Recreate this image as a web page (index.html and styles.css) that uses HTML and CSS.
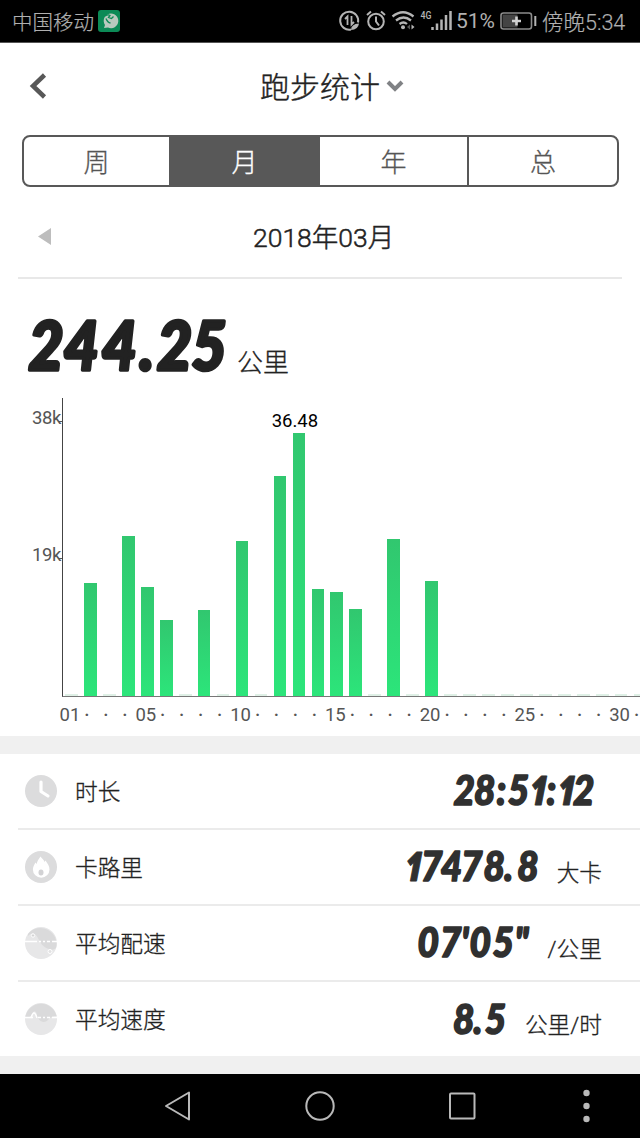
FILE: index.html
```html
<!DOCTYPE html>
<html lang="zh-CN">
<head>
    <meta charset="UTF-8">
    <meta name="viewport" content="width=device-width, initial-scale=1.0">
    <title>跑步统计</title>
    <link rel="stylesheet" href="styles.css">
</head>
<body>

<div class="status-bar">
    <span class="carrier">中国移动</span>
    <svg class="app-icon" width="22" height="22" viewBox="0 0 22 22">
        <rect width="22" height="22" rx="3" fill="#0c8a56"/>
        <path d="M6 18l1-3a7.300 7.300 0 1 1 3 2.500z" fill="#b9c9be"/>
        <path d="M7 6q3-2 5-.5l-1.500 2 3 1 2-2M8 8.500q1.500 4 4.500 4.500" stroke="#0c8a56" stroke-width="1.300" fill="none"/>
    </svg>
    <svg class="status-icons" width="116" height="30" viewBox="336 7 116 30" fill="none" stroke="#b4b4b4" stroke-width="2">
        <path d="M351 30.500a9 9 0 1 1 7-7"/>
        <path d="M345 20l2.500-2.500v8.500M351.500 17v8.500l2.500-2.500" stroke-width="1.800"/>
        <path d="M351 31q0-6 8-6.500-1 6.500-8 6.500z" fill="#b4b4b4" stroke="none"/>
        <circle cx="376" cy="22.500" r="7.800"/>
        <path d="M376 17.500v5l3 4M367 16l4-3.500M385 16l-4-3.500"/>
        <path d="M392.500 17.500q10.500-8.500 21 0M396 21.500q7.500-6 15 0M399.500 25q4-3 7.500 0" stroke-width="2.300"/>
        <circle cx="403" cy="28.300" r="2" fill="#b4b4b4" stroke="none"/>
        <path d="M410 25.500v5l-3-2.500z" fill="#555" stroke="none"/>
        <path d="M411.500 25.500v5l3-2.500z" fill="#b4b4b4" stroke="none"/>
        <text x="420.500" y="20" class="net" textLength="11" lengthAdjust="spacingAndGlyphs">4G</text>
        <path d="M432.500 31v-3M437 31v-6.500M441.500 31v-10.500M446 31v-15M450.500 31v-19" stroke-width="2.500"/>
    </svg>
    <span class="percent">51%</span>
    <svg class="battery" width="37" height="20" viewBox="0 0 37 20">
        <rect x="1" y="2" width="30.500" height="16" rx="2.500" fill="none" stroke="#8c8c8c" stroke-width="1.600"/>
        <rect x="2.500" y="3.500" width="15" height="13" fill="#444"/>
        <path d="M16.500 5.500v9M12 10h9" stroke="#d0d0d0" stroke-width="2.600"/>
        <path d="M35.300 5v10" stroke="#b4b4b4" stroke-width="2"/>
    </svg>
    <span class="clock">傍晚5:34</span>
</div>

<div class="header">
    <svg class="back" width="18" height="28" viewBox="0 0 18 28">
        <path d="M15.500 3L4 14l11.500 11" fill="none" stroke="#585858" stroke-width="4.500"/>
    </svg>
    <h1>跑步统计</h1>
    <svg class="chevron" width="18" height="14" viewBox="0 0 18 14">
        <path d="M2 3l7 7 7-7" fill="none" stroke="#808285" stroke-width="4"/>
    </svg>
</div>

<div class="tabs">
    <div class="tab">周</div>
    <div class="tab active">月</div>
    <div class="tab">年</div>
    <div class="tab">总</div>
</div>

<div class="month">
    <svg class="prev" width="13" height="17" viewBox="0 0 13 17"><path d="M13 0v17L0 8.500z" fill="#bdbdbd"/></svg>
    <span>2018年03月</span>
</div>

<div class="total">
    <svg class="num" width="206" height="60" viewBox="0 0 206 60"><text transform="scale(.92 1)" x="3.800 42 83.500 124.500 143.500 181" y="53">244.25</text></svg>
    <span>公里</span>
</div>

<div class="chart">
    <div class="y-axis">
        <span>38k</span>
        <span>19k</span>
    </div>
    <div class="plot">
        <div class="bars" id="bars"></div>
        <div class="days" id="days"></div>
    </div>
</div>

<div class="stats">
    <div class="row">
        <svg class="icon" width="32" height="32" viewBox="0 0 32 32">
            <circle cx="16" cy="16" r="16" fill="#dcdcdd"/>
            <path d="M16 7v9.500l7 4.500" fill="none" stroke="#fff" stroke-width="3.200" stroke-linecap="round" stroke-linejoin="round"/>
        </svg>
        <span class="label">时长</span>
        <svg class="num" width="150" height="44" viewBox="0 0 150 44"><text transform="scale(.9 1)" x="2.800 25.500 50.500 63 87 106 118 135.500" y="35.500">28:5<tspan class="one">1</tspan>:<tspan class="one">1</tspan>2</text></svg>
    </div>
    <div class="row">
        <svg class="icon" width="32" height="32" viewBox="0 0 32 32">
            <circle cx="16" cy="16" r="16" fill="#dcdcdd"/>
            <path d="M15.500 5.500c1.500 2 3.500 3.500 4 5.500l1-1.500c2 3 4 5.500 4 9a8.300 8.300 0 0 1-16.600 0c0-3 1.500-5 2.600-7l1.200 1.500c.3-3 2.300-5 3.800-7.500z" fill="#fff"/>
            <ellipse cx="16" cy="21.500" rx="2.500" ry="3" fill="#d2d2d4"/>
        </svg>
        <span class="label">卡路里</span>
        <svg class="num" width="140" height="44" viewBox="0 0 140 44"><text transform="scale(.9 1)" x="6 24.500 46.500 69 94 117 131.500" y="35.500"><tspan class="one">1</tspan>7478.8</text></svg>
        <span class="unit unit-cal">大卡</span>
    </div>
    <div class="row">
        <svg class="icon" width="32" height="32" viewBox="0 0 32 32">
            <circle cx="16" cy="16" r="16" fill="#e7e7e8"/>
            <path d="M3 7a16 16 0 0 1 28 14q-3 3-7 1-6-1-10-9Q9 2 3 9z" fill="#dadadb"/>
            <path d="M0 14.500h12M14 14.500h2M18 14.500h2M22 14.500h3M27 14.500h5" stroke="#fff" stroke-width="1.500"/>
            <circle cx="8" cy="8.500" r="1.700" fill="#d4d4d5" stroke="#fff"/>
            <circle cx="25" cy="24.500" r="2" fill="#e2e2e3" stroke="#fff"/>
        </svg>
        <span class="label">平均配速</span>
        <svg class="num" width="120" height="44" viewBox="0 0 120 44"><text transform="scale(.9 1)" x="6 31 54.500 64 89.500 114" y="35.500">07'05"</text></svg>
        <span class="unit unit-pace">/公里</span>
    </div>
    <div class="row">
        <svg class="icon" width="32" height="32" viewBox="0 0 32 32">
            <circle cx="16" cy="16" r="16" fill="#e7e7e8"/>
            <path d="M.5 13a16 16 0 0 1 31.100 0q-4 0-7 2-4 6-9 3-4-3-4-8Q9 6 7 11q-2 4-6.500 4z" fill="#dadadb"/>
            <path d="M0 14.500h8M13 14.500h3M18 14.500h2M22 14.500h3M27 14.500h5" stroke="#fff" stroke-width="1.500"/>
            <path d="M6 15q3-10 6 0" fill="none" stroke="#fff" stroke-width="1.500"/>
        </svg>
        <span class="label">平均速度</span>
        <svg class="num" width="62" height="44" viewBox="0 0 62 44"><text transform="scale(.9 1)" x="6.700 29.500 42" y="36.500">8.5</text></svg>
        <span class="unit unit-speed">公里/时</span>
    </div>
</div>

<div class="nav-bar">
    <svg width="640" height="64" viewBox="0 0 640 64" fill="none" stroke="#b9b9b9" stroke-width="2" stroke-linejoin="round">
        <path d="M189 18.500v27L166 32z"/>
        <circle cx="320" cy="32" r="13.700"/>
        <rect x="450" y="19.500" width="24.500" height="25" rx="1"/>
        <g fill="#b9b9b9" stroke="none">
            <circle cx="586.500" cy="19" r="3.200"/>
            <circle cx="586.500" cy="32" r="3.200"/>
            <circle cx="586.500" cy="45" r="3.200"/>
        </g>
    </svg>
</div>

<script>
    // bar height in px for each day that has a run
    const runs = {
        2: 113, 4: 160, 5: 109, 6: 76, 8: 86.5, 10: 155.5, 12: 220, 13: 263,
        14: 107.5, 15: 104, 16: 87.5, 18: 157, 20: 115
    };
    const bars = document.getElementById('bars');
    const days = document.getElementById('days');

    for (let d = 1; d <= 31; d++) {
        const cell = document.createElement('div');
        cell.className = 'cell';
        if (d === 13) {
            const tip = document.createElement('span');
            tip.className = 'tip';
            tip.textContent = '36.48';
            cell.appendChild(tip);
        }
        const bar = document.createElement('div');
        bar.className = runs[d] ? 'bar' : 'bar empty';
        if (runs[d]) bar.style.height = runs[d] + 'px';
        cell.appendChild(bar);
        bars.appendChild(cell);

        // every fifth day gets a number, the others a dot
        const day = document.createElement('div');
        if (d === 1 || d % 5 === 0) {
            day.className = 'day';
            day.textContent = String(d).padStart(2, '0');
        } else {
            day.className = 'day dot';
            day.textContent = '·';
        }
        days.appendChild(day);
    }
</script>

</body>
</html>
```
FILE: styles.css
```css
* {
    box-sizing: border-box;
}
body {
    margin: 0;
    width: 640px;
    height: 1138px;
    overflow: hidden;
    background: #fff;
    color: #222;
    font-family: Roboto, "Noto Sans CJK SC", sans-serif;
}
svg {
    display: block;
    flex-shrink: 0;
}
.status-bar {
    display: flex;
    align-items: center;
    height: 43px;
    padding-left: 12px;
    background: #000;
    border-bottom: 1px solid #555;
    color: #b0b0b0;
    font-size: 20.5px;
    font-weight: 300;
    white-space: nowrap;
}
.carrier {
    width: 86px;
    -webkit-text-stroke: 0.2px;
}
.status-icons {
    margin-left: 216px;
}
.net {
    fill: #b4b4b4;
    stroke: none;
    font: 500 11px Roboto, sans-serif;
}
.percent {
    width: 44px;
    margin-left: 4px;
    font-size: 21px;
    font-weight: 400;
}
.clock {
    margin: -2px 0 0 5px;
    font-size: 21.5px;
    -webkit-text-stroke: 0.2px;
}
.header {
    display: flex;
    align-items: center;
    height: 86px;
    padding-left: 29px;
}
h1 {
    width: 120px;
    margin: 4px 0 0 213px;
    font-size: 30px;
    font-weight: 300;
    line-height: 40px;
    -webkit-text-stroke: 0.4px;
}
.chevron {
    margin-left: 6px;
}
.tabs {
    display: grid;
    grid-template-columns: 145px 151px 149px 1fr;
    grid-template-rows: 48px;
    width: 597px;
    height: 52px;
    margin: 6px 0 0 22px;
    border: 2px solid #585858;
    border-radius: 8px;
    color: #555;
    font-size: 26px;
    font-weight: 300;
    -webkit-text-stroke: 0.3px;
}
.tab {
    padding-top: 2px;
    line-height: 49px;
    text-align: center;
}
.tab:nth-child(3) {
    border-right: 2px solid #585858;
}
.tab.active {
    background: #585858;
    color: #fff;
}
.month {
    display: flex;
    align-items: center;
    height: 92px;
    margin: 0 18px;
    padding: 0 0 0 20px;
    border-bottom: 2px solid #e8e8e8;
    font-size: 26.5px;
}
.month span {
    margin: 6px 0 0 202px;
    white-space: nowrap;
    font-weight: 300;
    -webkit-text-stroke: 0.5px;
}
.prev {
    margin-top: 9px;
}
.total {
    display: flex;
    height: 119px;
    padding: 38px 0 0 25px;
    font-size: 26px;
    font-weight: 300;
}
.total span {
    margin: 27px 0 0 6px;
    line-height: 38px;
    -webkit-text-stroke: 0.3px;
}
.num {
    overflow: visible;
    fill: #303030;
    stroke: #303030;
    stroke-width: 1.7px;
    stroke-linejoin: round;
    font-family: Lato, "Open Sans", sans-serif;
    font-size: 41px;
    font-style: italic;
    font-weight: 900;
    -webkit-text-stroke: 0;
}
/* Lato draws its 1 with a foot */
.one {
    stroke-width: 1px;
    font-family: "Open Sans", sans-serif;
    font-weight: 800;
    font-stretch: 75%;
}
.total .num {
    fill: #222;
    stroke: #222;
    stroke-width: 3.6px;
    font-size: 66px;
}
.chart {
    display: flex;
    height: 338px;
    color: #555;
    font-size: 18.5px;
}
.y-axis {
    width: 62px;
    padding: 9px 1px 0 0;
    text-align: right;
    letter-spacing: -0.4px;
}
.y-axis span {
    display: block;
    position: relative;
    height: 137px;
    line-height: 23px;
}
/* tick mark, runs over the end of the label */
.y-axis span::after {
    content: "";
    position: absolute;
    top: 14px;
    right: -1px;
    width: 4px;
    height: 1px;
    background: #555;
}
.plot {
    width: 578px;
}
.bars {
    display: flex;
    align-items: flex-end;
    height: 299px;
    border-left: 1px solid #444;
    border-bottom: 1px solid #777;
}
.cell {
    display: flex;
    flex: 0 0 18.96px;
    flex-direction: column;
    align-items: center;
}
.cell:first-child {
    margin-left: -1px;
}
.bar {
    width: 12.7px;
    background: linear-gradient(#31c76f, #2ce57a);
}
.bar.empty {
    height: 2px;
    background: #dff0e6;
}
.tip {
    margin: 0 -24px 1px -32px;
    color: #000;
    font-size: 18.5px;
    line-height: 22px;
}
.days {
    display: flex;
    padding-top: 7px;
}
.day {
    display: flex;
    flex: 0 0 18.96px;
    justify-content: center;
    min-width: 0;
    padding-right: 3px;
    line-height: 22px;
}
.day.dot {
    padding-right: 7px;
    font-weight: 500;
}
.stats {
    border-top: 18px solid #f0f0f0;
    border-bottom: 18px solid #f0f0f0;
}
.row {
    display: flex;
    align-items: center;
    height: 76px;
    margin-left: 18px;
    padding: 0 38px 0 7px;
    border-bottom: 2px solid #ebebeb;
    font-size: 22.7px;
    font-weight: 300;
    -webkit-text-stroke: 0.3px;
}
.row:first-child {
    padding-right: 39px;
}
.row:last-child {
    height: 74px;
    border-bottom: none;
}
.label {
    flex: 1;
    margin: -1px 0 0 18px;
}
.unit {
    margin-top: 9px;
    text-align: right;
    white-space: nowrap;
}
.unit-cal {
    width: 63px;
}
.unit-pace {
    width: 70px;
}
.unit-speed {
    width: 93px;
}
.nav-bar {
    height: 64px;
    background: #000;
}
```
